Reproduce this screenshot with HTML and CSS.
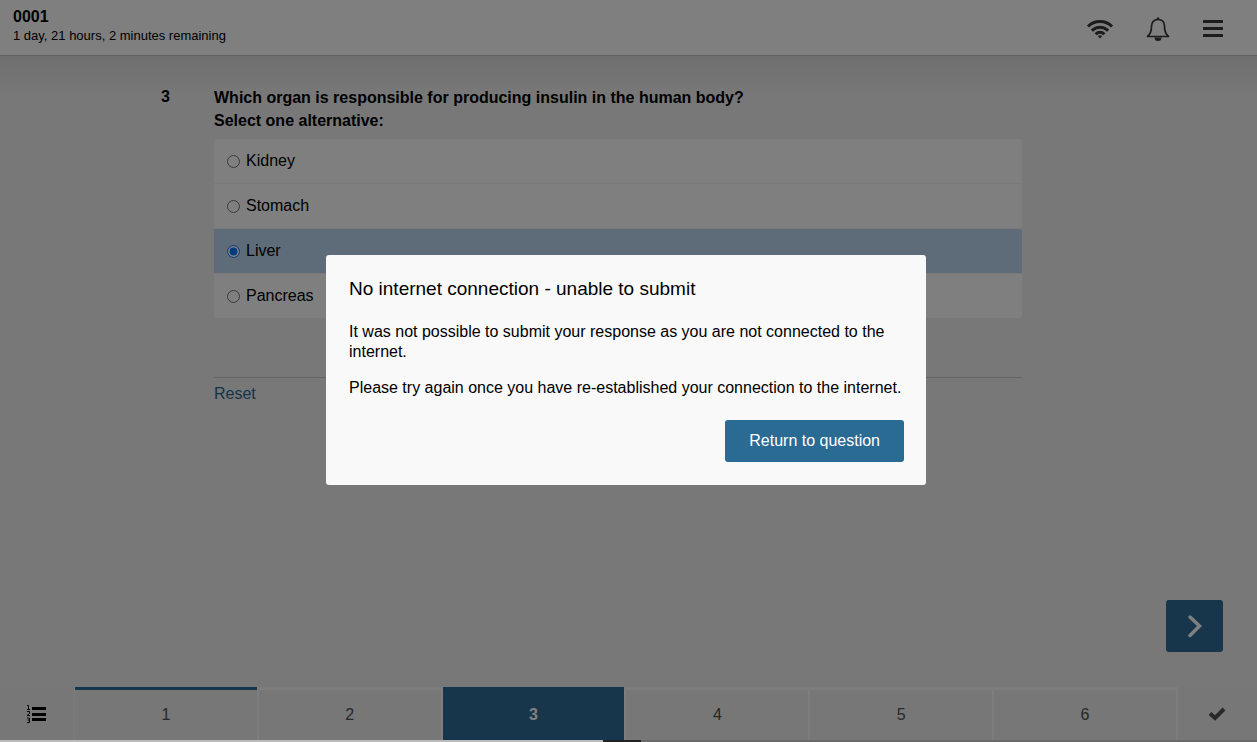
FILE: index.html
```html
<!DOCTYPE html>
<html lang="en">
<head>
    <meta charset="UTF-8">
    <meta name="viewport" content="width=device-width, initial-scale=1">
    <title>0001</title>
    <link rel="stylesheet" href="styles.css">
</head>
<body>

<header class="topbar">
    <div class="exam-info">
        <h1 class="exam-id">0001</h1>
        <div class="time-left">1 day, 21 hours, 2 minutes remaining</div>
    </div>
    <div class="tools">
        <button class="tool" aria-label="Connection">
            <svg width="28" height="22" viewBox="0 0 28 22" fill="none" stroke="#383838" stroke-width="3">
                <path d="M2 8.5C8.5 1.8 19.5 1.8 26 8.5"/>
                <path d="M5.8 12.600C10.5 8 17.5 8 22.2 12.600"/>
                <path d="M9.6 16.200C12.2 13.6 15.8 13.6 18.4 16.200"/>
                <path d="M14 20.5l-2.2-2.5c1.3-1.1 3.1-1.1 4.4 0z" fill="#383838" stroke="none"/>
            </svg>
        </button>
        <button class="tool" aria-label="Notifications">
            <svg width="24" height="26" viewBox="0 0 24 26">
                <path d="M1.500 20.500C4.500 18 5.500 15 5.500 10.500C5.500 6 8 3.500 12 3.500S18.500 6 18.500 10.500C18.500 15 19.500 18 22.500 20.500z" fill="none" stroke="#383838" stroke-width="1.700" stroke-linejoin="round"/>
                <path d="M12 1.500v2" stroke="#383838" stroke-width="2.500"/>
                <path d="M8.500 21.500h7a3.500 3.500 0 0 1-7 0z" fill="#383838"/>
            </svg>
        </button>
        <button class="tool" aria-label="Menu">
            <svg width="22" height="18" viewBox="0 0 22 18" fill="#383838">
                <rect x="1" y="0" width="20" height="3" rx="0.500"/>
                <rect x="1" y="7" width="20" height="3" rx="0.500"/>
                <rect x="1" y="14" width="20" height="3" rx="0.500"/>
            </svg>
        </button>
    </div>
</header>

<main class="content">
    <div class="question">
        <div class="question-number">3</div>
        <div class="question-body">
            <h2 class="question-text">Which organ is responsible for producing insulin in the human body?</h2>
            <fieldset class="alternatives">
                <legend>Select one alternative:</legend>
                <div class="options">
                    <label class="option"><input type="radio" name="answer">Kidney</label>
                    <label class="option"><input type="radio" name="answer">Stomach</label>
                    <label class="option selected"><input type="radio" name="answer" checked>Liver</label>
                    <label class="option"><input type="radio" name="answer">Pancreas</label>
                </div>
            </fieldset>
            <div class="question-footer">
                <a class="reset" href="#">Reset</a>
            </div>
        </div>
    </div>
    <button class="next-btn" aria-label="Next question">
        <svg width="16" height="24" viewBox="0 0 16 24" fill="none" stroke="#fff" stroke-width="3.500" stroke-linecap="round">
            <path d="M3 3l9.500 9L3 21.500"/>
        </svg>
    </button>
</main>

<nav class="pager">
    <button class="pager-side" aria-label="Question list">
        <svg width="20" height="20" viewBox="0 0 20 20">
            <g fill="#000">
                <rect x="6" y="3" width="14" height="3"/>
                <rect x="6" y="9" width="14" height="3"/>
                <rect x="6" y="14" width="14" height="3"/>
            </g>
            <g fill="none" stroke="#111">
                <path d="M1 1.500h1.500v4M1 5.500h3"/>
                <path d="M1 7.500h2.500v2L1 11.500h3"/>
                <path d="M1 14h2.500v4.500H1M1.500 16h2"/>
            </g>
        </svg>
    </button>
    <a class="page visited" href="#">1</a>
    <a class="page" href="#">2</a>
    <a class="page current" href="#" aria-current="page">3</a>
    <a class="page" href="#">4</a>
    <a class="page" href="#">5</a>
    <a class="page" href="#">6</a>
    <button class="pager-side pager-end" aria-label="Finish">
        <svg width="18" height="14" viewBox="0 0 18 14" fill="none" stroke="#505050" stroke-width="4">
            <path d="M2 6.500l5 4.500 9-9"/>
        </svg>
    </button>
</nav>
<div class="bottom-edge"></div>

<div class="overlay">
    <div class="dialog" role="alertdialog" aria-modal="true" aria-labelledby="dialog-title">
        <h2 id="dialog-title">No internet connection - unable to submit</h2>
        <p>It was not possible to submit your response as you are not connected to the internet.</p>
        <p>Please try again once you have re-established your connection to the internet.</p>
        <button class="return-btn">Return to question</button>
    </div>
</div>

</body>
</html>
```

FILE: styles.css
```css
* {
    box-sizing: border-box;
}

body {
    margin: 0;
    min-height: 100vh;
    display: flex;
    flex-direction: column;
    background-color: #f1f1f1;
    color: #000;
    font-family: "Liberation Sans", Arial, sans-serif;
    font-size: 16px;
    line-height: 20px;
}

h1, h2, p {
    margin: 0;
}

button {
    border: 0;
    padding: 0;
    background: none;
    font: inherit;
    cursor: pointer;
}

svg {
    display: block;
}

/* top bar */
.topbar {
    display: flex;
    justify-content: space-between;
    align-items: center;
    height: 56px;
    padding: 0 33px 0 13px;
    background-color: #fff;
    border-bottom: 1px solid #c4c4c4;
}

.exam-info {
    padding-bottom: 4px;
}

.exam-id {
    font-size: 16px;
    line-height: 20px;
}

.time-left {
    font-size: 13px;
    line-height: 18px;
}

.tools {
    display: flex;
    align-items: center;
    gap: 32px;
    padding-top: 2px;
}

/* question */
.content {
    flex: 1;
    display: flex;
    flex-direction: column;
    justify-content: space-between;
    padding: 30px 34px 35px;
    background: linear-gradient(#dedede, #f1f1f1 40px);
}

.question {
    display: flex;
    width: 100%;
    max-width: 935px;
    margin: 0 auto;
    padding-right: 74px;
}

.question-number {
    width: 53px;
    font-weight: bold;
    line-height: 22px;
}

.question-body {
    flex: 1;
}

.question-text {
    font-size: 16px;
    line-height: 23px;
}

.alternatives {
    margin: 0;
    padding: 0;
    border: 0;
}

.alternatives legend {
    padding: 0;
    font-weight: bold;
    line-height: 23px;
}

.options {
    margin-top: 7px;
    border-radius: 3px;
    background-color: #fff;
    overflow: hidden;
}

.option {
    display: flex;
    align-items: center;
    gap: 6px;
    height: 44px;
    padding-left: 13px;
}

.option + .option {
    height: 45px;
    border-top: 1px solid #f4f4f4;
}

.option input {
    width: 13px;
    height: 13px;
    margin: 0;
}

.option.selected {
    background-color: #bbd8f0;
}

.question-footer {
    margin-top: 59px;
    padding-top: 6px;
    border-top: 1px solid #c8c8c8;
}

.reset {
    color: #2a6b94;
    text-decoration: none;
}

.next-btn {
    align-self: flex-end;
    display: flex;
    align-items: center;
    justify-content: center;
    width: 57px;
    height: 52px;
    border-radius: 3px;
    background-color: #2e6d98;
}

/* page navigation */
.pager {
    display: flex;
    height: 53px;
    background-color: #fbfbfb;
}

.pager-side {
    display: flex;
    align-items: center;
    justify-content: center;
    width: 75px;
    padding-right: 3px;
    border-right: 1px solid #f8f8f8;
    background-color: #eee;
}

.pager-end {
    width: 79px;
    padding-right: 0;
    border-right: 0;
}

.page {
    flex: 1;
    display: flex;
    align-items: center;
    justify-content: center;
    margin-right: 2px;
    border-top: 3px solid #fbfbfb;
    background-color: #eee;
    color: #505050;
    text-decoration: none;
}

.page.visited {
    border-top-color: #2e6d98;
}

.page.current {
    border-top-color: #2e6d98;
    background-color: #2e6d98;
    color: #fff;
    font-weight: bold;
}

.bottom-edge {
    height: 2px;
    background: linear-gradient(to right, #bbb 48%, #222 48%, #222 51%, #6a6a6a 51%);
}

/* dialog */
.overlay {
    position: fixed;
    inset: 0 0 2px;
    display: flex;
    align-items: center;
    justify-content: center;
    padding-right: 5px;
    background-color: rgba(0, 0, 0, 0.5);
}

.dialog {
    display: flex;
    flex-direction: column;
    width: 600px;
    max-width: 100%;
    padding: 23px 22px 23px 23px;
    border-radius: 3px;
    background-color: #f9f9f9;
}

.dialog h2 {
    margin-bottom: 22px;
    font-size: 19px;
    font-weight: normal;
    line-height: 22px;
}

.dialog p {
    margin-bottom: 16px;
}

.return-btn {
    align-self: flex-end;
    height: 42px;
    margin-top: 6px;
    padding: 0 24px;
    border-radius: 3px;
    background-color: #2a6b94;
    color: #fff;
}
```
